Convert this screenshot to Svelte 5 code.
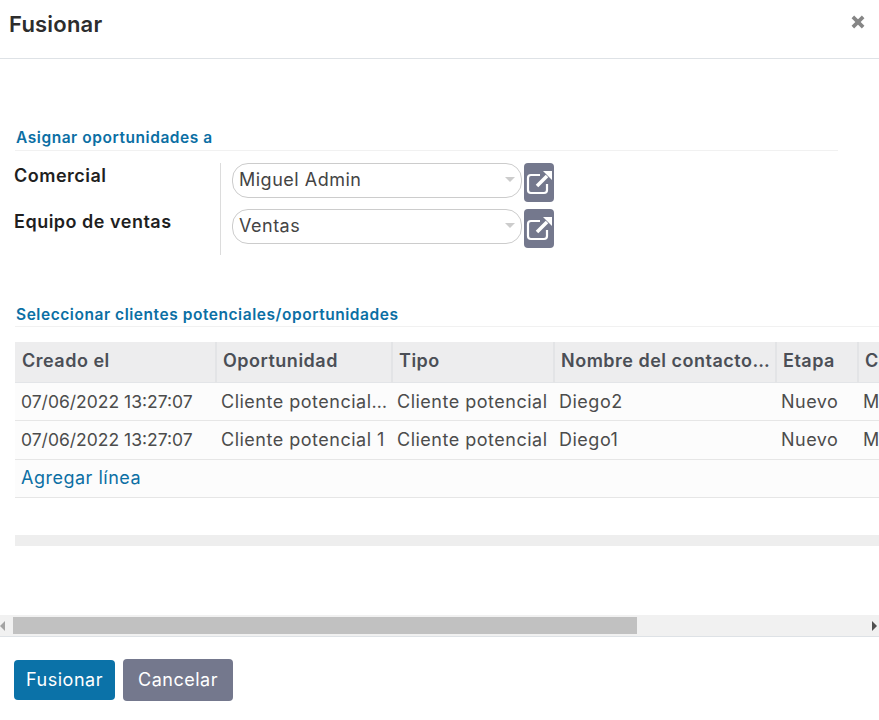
<script>
  const rows = [
    { created: "07/06/2022 13:27:07", name: "Cliente potencial…", type: "Cliente potencial", contact: "Diego2", stage: "Nuevo", last: "Miguel Admin" },
    { created: "07/06/2022 13:27:07", name: "Cliente potencial 1", type: "Cliente potencial", contact: "Diego1", stage: "Nuevo", last: "Miguel Admin" }
  ];
  const columns = [
    { label: "Creado el", width: 201 },
    { label: "Oportunidad", width: 176 },
    { label: "Tipo", width: 162 },
    { label: "Nombre del contacto…", width: 222 },
    { label: "Etapa", width: 82 },
    { label: "Comercial", width: 120 }
  ];
  const fields = [
    { label: "Comercial", value: "Miguel Admin" },
    { label: "Equipo de ventas", value: "Ventas" }
  ];
</script>

<div class="modal">
  <header class="head">
    <h1>Fusionar</h1>
    <svg class="close" viewBox="0 0 14 14" aria-hidden="true"><path d="M2.5 2.5l9 9M11.5 2.5l-9 9"/></svg>
  </header>

  <main class="body">
    <div class="sep first"><span>Asignar oportunidades a</span></div>
    <div class="form">
      <div class="labels">
        {#each fields as field}
          <label>{field.label}</label>
        {/each}
      </div>
      <div class="inputs">
        {#each fields as field}
          <div class="input-row">
            <div class="select">
              <span>{field.value}</span>
              <i class="caret"></i>
            </div>
            <button type="button" class="ext" aria-label="Abrir">
              <svg viewBox="0 0 26 24" aria-hidden="true">
                <path class="box" d="M14 4H5a3 3 0 0 0-3 3v12a3 3 0 0 0 3 3h13a3 3 0 0 0 3-3v-6"/>
                <path class="shaft" d="M11 15L21 5"/>
                <path class="tip" d="M17 0h9v9z"/>
              </svg>
            </button>
          </div>
        {/each}
      </div>
    </div>

    <div class="sep second"><span>Seleccionar clientes potenciales/oportunidades</span></div>
    <div class="table-wrap">
      <table>
        <colgroup>
          {#each columns as col}
            <col style="width: {col.width}px" />
          {/each}
        </colgroup>
        <thead>
          <tr>
            {#each columns as col}
              <th>{col.label}</th>
            {/each}
          </tr>
        </thead>
        <tbody>
          {#each rows as row}
            <tr>
              <td class="date">{row.created}</td>
              <td>{row.name}</td>
              <td>{row.type}</td>
              <td>{row.contact}</td>
              <td>{row.stage}</td>
              <td>{row.last}</td>
            </tr>
          {/each}
          <tr class="add">
            <td colspan="6"><a href="#add">Agregar línea</a></td>
          </tr>
        </tbody>
      </table>
      <div class="foot-bar"></div>
    </div>
  </main>

  <div class="scrollbar">
    <i class="arrow left"></i>
    <div class="thumb"></div>
    <i class="arrow right"></i>
  </div>

  <footer class="foot">
    <button type="button" class="btn primary">Fusionar</button>
    <button type="button" class="btn secondary">Cancelar</button>
  </footer>
</div>

<style>
  :global(body) {
    margin: 0;
    background: #fff;
  }

  .modal {
    width: 879px;
    height: 720px;
    display: flex;
    flex-direction: column;
    overflow: hidden;
    font-family: Inter, "Liberation Sans", sans-serif;
    font-size: 18px;
    letter-spacing: 0.5px;
    color: #4c4c4c;
  }

  .head {
    height: 58px;
    flex: none;
    display: flex;
    align-items: flex-start;
    justify-content: space-between;
    border-bottom: 1px solid #dee2e6;
    padding: 0 14px 0 9px;
  }

  h1 {
    margin: 11px 0 0;
    font-size: 22px;
    font-weight: 600;
    letter-spacing: 0.2px;
    line-height: 27px;
    color: #2d2d2d;
  }

  .close {
    width: 16px;
    height: 16px;
    margin-top: 14px;
    margin-right: -1px;
    fill: none;
    stroke: #868686;
    stroke-width: 3.2;
  }

  .body {
    flex: 1;
    min-height: 0;
    overflow: hidden;
  }

  .sep {
    margin-left: 15px;
    border-bottom: 1px solid #f1f1f1;
    font-size: 15.5px;
    font-weight: 600;
    letter-spacing: 0.55px;
    line-height: 20px;
    color: #0b6fa4;
    padding-left: 1px;
  }

  .sep.first {
    margin-top: 69px;
    margin-right: 41px;
    height: 22px;
  }

  .sep.second {
    margin-top: 49px;
    height: 21px;
    padding-top: 1px;
  }

  .form {
    display: flex;
    margin: 12px 0 0 14px;
  }

  .labels {
    width: 206px;
    display: flex;
    flex-direction: column;
    gap: 24px;
    padding-top: 2px;
  }

  label {
    font-size: 18px;
    font-weight: 600;
    line-height: 22px;
    color: #1f1f1f;
  }

  .inputs {
    border-left: 1px solid #dcdcdc;
    padding: 0 0 7px 11px;
    display: flex;
    flex-direction: column;
    gap: 7px;
  }

  .input-row {
    display: flex;
    gap: 2px;
    height: 39px;
  }

  .select {
    box-sizing: border-box;
    width: 290px;
    height: 35px;
    border: 1px solid #ccc;
    border-radius: 16px;
    display: flex;
    align-items: center;
    justify-content: space-between;
    padding: 0 6px 2px 6px;
    color: #444;
  }

  .caret {
    width: 0;
    height: 0;
    border-left: 5px solid transparent;
    border-right: 5px solid transparent;
    border-top: 5px solid #ccc;
  }

  .ext {
    width: 30px;
    height: 39px;
    padding: 0;
    border: none;
    border-radius: 4px;
    background: #74788d;
    display: flex;
    align-items: center;
    justify-content: center;
  }

  .ext svg {
    width: 26px;
    height: 24px;
  }

  .box,
  .shaft {
    fill: none;
    stroke: #fff;
    stroke-width: 2.2;
  }

  .shaft {
    stroke-width: 3.6;
  }

  .tip {
    fill: #fff;
  }

  .table-wrap {
    margin: 15px 0 0 15px;
    width: 864px;
    overflow: hidden;
  }

  table {
    width: 963px;
    table-layout: fixed;
    border-collapse: collapse;
  }

  th {
    height: 40px;
    box-sizing: border-box;
    background: #ededee;
    border-right: 2px solid #e3e4e6;
    border-bottom: 1px solid #e3e5e8;
    text-align: left;
    padding: 0 6px 2px 6px;
    font-size: 18px;
    font-weight: 600;
    color: #4b4f56;
    white-space: nowrap;
    overflow: hidden;
  }

  th:first-child {
    padding-left: 7px;
  }

  td {
    height: 38px;
    box-sizing: border-box;
    background: #fcfcfc;
    border-bottom: 1px solid #e6e6e6;
    padding: 0 5px;
    white-space: nowrap;
    overflow: hidden;
  }

  tbody tr:nth-child(2) td {
    height: 39px;
  }

  .add td {
    padding-bottom: 2px;
  }

  td.date {
    font-size: 17.5px;
    letter-spacing: 0;
  }

  td:first-child {
    padding-left: 6px;
  }

  a {
    color: #0b6fa4;
    text-decoration: none;
  }

  .foot-bar {
    height: 11px;
    margin-top: 37px;
    background: #eeeeee;
  }

  .scrollbar {
    height: 22px;
    flex: none;
    box-sizing: border-box;
    background: #f1f1f1;
    display: flex;
    align-items: center;
    border-bottom: 1px solid #dee2e6;
  }

  .arrow {
    width: 0;
    height: 0;
    border-top: 5px solid transparent;
    border-bottom: 5px solid transparent;
  }

  .arrow.left {
    border-right: 5px solid #a3a3a3;
    margin: 0 8px 0 0;
  }

  .arrow.right {
    border-left: 5px solid #505050;
    margin: 0 2px 0 auto;
  }

  .thumb {
    width: 624px;
    height: 17px;
    background: #c1c1c1;
  }

  .foot {
    flex: none;
    height: 83px;
    box-sizing: border-box;
    padding: 3px 0 0 14px;
    display: flex;
    align-items: center;
    gap: 8px;
  }

  .btn {
    border: none;
    border-radius: 4px;
    color: #fff;
    font-family: inherit;
    font-size: 18px;
    letter-spacing: 0.5px;
    padding: 0 0 2px;
  }

  .primary {
    width: 101px;
    height: 40px;
    background: #0b72a8;
  }

  .secondary {
    width: 110px;
    height: 42px;
    background: #74788d;
  }
</style>
